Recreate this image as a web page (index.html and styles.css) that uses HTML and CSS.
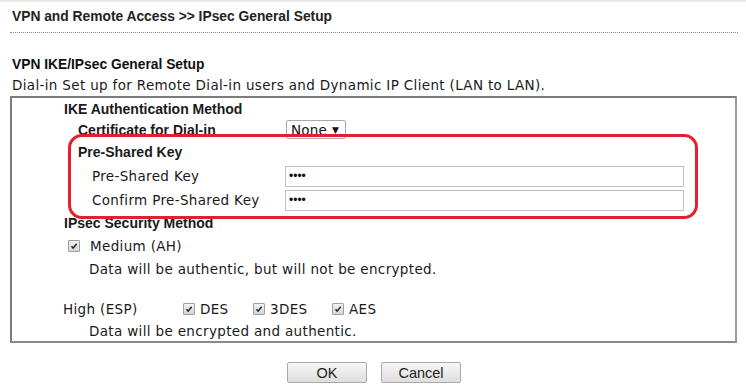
FILE: index.html
```html
<!DOCTYPE html>
<html>
<head>
<meta charset="utf-8">
<link rel="stylesheet" href="styles.css">
</head>
<body>
<div class="topbar"></div>
<div class="page">
  <h1 class="title">VPN and Remote Access &gt;&gt; IPsec General Setup</h1>
  <h2 class="section">VPN IKE/IPsec General Setup</h2>
  <p class="desc">Dial-in Set up for Remote Dial-in users and Dynamic IP Client (LAN to LAN).</p>
  <div class="box">
    <div class="row r1"><span class="bold ind1">IKE Authentication Method</span></div>
    <div class="row r2 grid"><span class="bold ind2">Certificate for Dial-in</span><div class="select"><span class="sel-text">None</span><span class="sel-arrow">▼</span></div></div>
    <div class="row r3"><span class="bold ind2">Pre-Shared Key</span></div>
    <div class="row r4 grid"><span class="ind3">Pre-Shared Key</span><input class="field" type="password" value="1234"></div>
    <div class="row r5 grid"><span class="ind3">Confirm Pre-Shared Key</span><input class="field" type="password" value="1234"></div>
    <div class="row r6"><span class="bold ind1">IPsec Security Method</span></div>
    <div class="row r7"><span class="ind-cb cb"><svg viewBox="0 0 12 12" width="12" height="12"><path d="M3 6.2 L5 8.6 L9.2 3.2" fill="none" stroke="#222" stroke-width="1.8"/></svg></span><span class="cb-label">Medium (AH)</span></div>
    <div class="row r8"><span class="ind4">Data will be authentic, but will not be encrypted.</span></div>
    <div class="row r9"><span class="ind-high">High (ESP)</span>
      <span class="opt"><span class="cb"><svg viewBox="0 0 12 12" width="12" height="12"><path d="M3 6.2 L5 8.6 L9.2 3.2" fill="none" stroke="#222" stroke-width="1.8"/></svg></span><span class="opt-label">DES</span></span>
      <span class="opt"><span class="cb"><svg viewBox="0 0 12 12" width="12" height="12"><path d="M3 6.2 L5 8.6 L9.2 3.2" fill="none" stroke="#222" stroke-width="1.8"/></svg></span><span class="opt-label">3DES</span></span>
      <span class="opt"><span class="cb"><svg viewBox="0 0 12 12" width="12" height="12"><path d="M3 6.2 L5 8.6 L9.2 3.2" fill="none" stroke="#222" stroke-width="1.8"/></svg></span><span class="opt-label">AES</span></span>
    </div>
    <div class="row r10"><span class="ind4">Data will be encrypted and authentic.</span></div>
    <div class="highlight"></div>
  </div>
  <div class="buttons">
    <button class="btn btn-ok">OK</button>
    <button class="btn btn-cancel">Cancel</button>
  </div>
</div>
</body>
</html>
```
FILE: styles.css
```css
* { box-sizing: border-box; }
html, body { margin: 0; padding: 0; background: #fff; }
body { font-family: "DejaVu Sans", Verdana, sans-serif; font-size: 13.5px; letter-spacing: 0.34px; color: #1a1a1a; }
.topbar { height: 2px; background: #e9e9ec; }
.page { padding-left: 10px; width: 738px; }
.title {
  margin: 0; padding-left: 2px;
  font: bold 13.8px "Liberation Sans", Arial, sans-serif;
  letter-spacing: 0;
  color: #222;
  height: 31px; line-height: 30px;
  border-bottom: 1px dotted #8a8a8a;
}
.section {
  margin: 22px 0 0; padding-left: 2px;
  font: bold 13.8px "Liberation Sans", Arial, sans-serif;
  letter-spacing: 0;
  line-height: 20px; color: #111;
}
.desc { margin: 0; padding-left: 2px; line-height: 21px; }
.box {
  position: relative;
  margin-top: 0;
  width: 727px;
  border: 2px solid #7c7c7c;
  border-right-color: #9a9a9a; border-bottom-color: #8a8a8a;
}
.row { display: flex; align-items: center; }
.grid { display: grid; grid-template-columns: 273px 1fr; align-items: center; }
.bold { font: bold 14px "Liberation Sans", Arial, sans-serif; letter-spacing: 0; }
.ind1 { padding-left: 52px; }
.ind2 { padding-left: 66px; }
.ind3 { padding-left: 80px; }
.ind4 { padding-left: 77px; }
.r1 { height: 21px; }
.r2 { height: 21px; }
.r3 { height: 24px; }
.r4 { height: 24px; }
.r5 { height: 24px; }
.r6 { height: 21px; }
.r7 { height: 25px; }
.r8 { height: 21px; }
.r9 { height: 22px; margin-top: 19px; }
.r10 { height: 21px; }
.select {
  width: 60px; height: 19px;
  border: 1px solid #a9a9a9; border-radius: 2px;
  display: flex; align-items: center; justify-content: space-between;
  padding: 0 6px 0 4px; margin-left: 1px;
  font-size: 13.5px; letter-spacing: 0.2px; color: #111; background: #fff;
}
.sel-arrow { font-size: 9px; color: #111; }
.field {
  width: 399px; height: 21px;
  border: 1px solid #c4c4c4; border-top-color: #bdbdbd;
  padding: 0 3px; margin: 0;
  font: 12px "Liberation Sans", Arial, sans-serif; letter-spacing: 0; color: #111;
  background: #fff; outline: none;
}
.cb {
  width: 12px; height: 12px;
  border: 1px solid #9e9e9e; border-radius: 1px;
  background: linear-gradient(#f2f2f2, #d6d6d6);
  display: inline-flex; align-items: center; justify-content: center;
}
.cb svg { display: block; }
.ind-cb { margin-left: 56px; }
.cb-label { margin-left: 10px; }
.ind-high { padding-left: 51px; width: 171px; }
.opt { display: inline-flex; align-items: center; }
.opt:nth-of-type(2) { width: 70px; }
.opt:nth-of-type(3) { width: 79px; }
.opt-label { margin-left: 5px; }
.highlight {
  position: absolute;
  left: 56px; top: 36px;
  width: 630px; height: 85px;
  border: 3px solid #e5202e; border-radius: 14px;
  pointer-events: none;
}
.buttons { display: flex; justify-content: center; gap: 14px; margin-top: 19px; }
.btn {
  width: 80px; height: 21px;
  border: 1px solid #a9a9a9; border-radius: 2px;
  background: linear-gradient(#f7f7f7, #dedede);
  font: 14.5px "Liberation Sans", Arial, sans-serif; color: #222;
  padding: 0;
}
```
